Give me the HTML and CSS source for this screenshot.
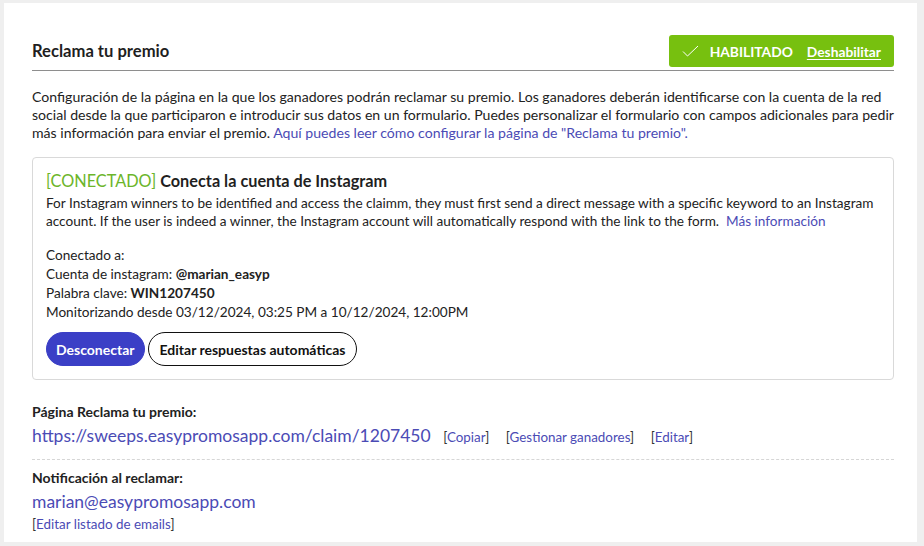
FILE: index.html
```html
<!DOCTYPE html>
<html lang="es">
<head>
	<meta charset="UTF-8">
	<meta name="viewport" content="width=device-width, initial-scale=1.0">
	<title>Reclama tu premio</title>
	<link rel="stylesheet" href="styles.css">
</head>
<body>
	<div class="card">
		<div class="card-head">
			<h3>Reclama tu premio</h3>
			<div class="status">
				<svg class="status-check" width="17" height="12" viewBox="0 0 17 12"><path d="M1 6.5 L5.5 11 L16 1" fill="none" stroke="#fff" stroke-width="1"/></svg>
				<span class="status-label">HABILITADO</span>
				<a href="#" class="status-link">Deshabilitar</a>
			</div>
		</div>

		<p class="intro">Configuración de la página en la que los ganadores podrán reclamar su premio. Los ganadores deberán identificarse con la cuenta de la red social desde la que participaron e introducir sus datos en un formulario. Puedes personalizar el formulario con campos adicionales para pedir más información para enviar el premio. <a href="#">Aquí puedes leer cómo configurar la página de "Reclama tu premio".</a></p>

		<div class="ig-box">
			<h4><span class="ok">[CONECTADO]</span> Conecta la cuenta de Instagram</h4>
			<p class="ig-text">For Instagram winners to be identified and access the claimm, they must first send a direct message with a specific keyword to an Instagram account. If the user is indeed a winner, the Instagram account will automatically respond with the link to the form. &nbsp;<a href="#">Más información</a></p>
			<ul class="ig-info">
				<li>Conectado a:</li>
				<li>Cuenta de instagram: <b>@marian_easyp</b></li>
				<li>Palabra clave: <b>WIN1207450</b></li>
				<li>Monitorizando desde 03/12/2024, 03:25 PM a 10/12/2024, 12:00PM</li>
			</ul>
			<div class="ig-actions">
				<button type="button" class="btn btn-primary">Desconectar</button>
				<button type="button" class="btn btn-outline">Editar respuestas automáticas</button>
			</div>
		</div>

		<div class="field">
			<div class="field-label">Página Reclama tu premio:</div>
			<div class="field-value">
				<a href="#" class="big-link">https://sweeps.easypromosapp.com/claim/1207450</a>
				<span class="small-links">
					<span class="br">[<a href="#">Copiar</a>]</span>
					<span class="br">[<a href="#">Gestionar ganadores</a>]</span>
					<span class="br">[<a href="#">Editar</a>]</span>
				</span>
			</div>
		</div>
		<div class="field field-last">
			<div class="field-label">Notificación al reclamar:</div>
			<div class="field-value">
				<a href="#" class="big-link">marian@easypromosapp.com</a>
			</div>
			<span class="br small">[<a href="#">Editar listado de emails</a>]</span>
		</div>
	</div>
</body>
</html>
```

FILE: styles.css
```css
body{
	margin: 0;
	padding: 3px 7px 4px 4px;
	background: #efefef;
	font-family: "Lato", "Open Sans", sans-serif;
	color: #222;
	font-size: 13.6px;
}
a{
	color: #4b4bb5;
	text-decoration: none;
}
.card{
	background: #fff;
	padding: 32px 23px 10px 28px;
	height: 539px;
	box-sizing: border-box;
}
/* cabecera */
.card-head{
	display: flex;
	justify-content: space-between;
	align-items: center;
	padding-bottom: 3px;
	border-bottom: 1px solid #8e8e8e;
}
.card-head h3{
	margin: 0;
	font-size: 16.6px;
	font-weight: 700;
	color: #1f1f1f;
}
.status{
	display: flex;
	align-items: center;
	height: 32px;
	padding: 0 13px 0 13px;
	background: #77c00f;
	border-radius: 3px;
	color: #fff;
	font-weight: 700;
	font-size: 13.8px;
}
.status-check{
	margin-right: 11px;
}
.status-label{
	margin-right: 14px;
}
.status .status-link{
	color: #fff;
	text-decoration: underline;
	text-underline-offset: 2px;
}
.intro{
	margin: 17px 0 15px;
	font-size: 14.1px;
	line-height: 18px;
}
/* caja instagram */
.ig-box{
	border: 1px solid #d9d9d9;
	border-radius: 4px;
	padding: 13px 13px 13px 13px;
}
.ig-box h4{
	margin: 0;
	font-size: 16.3px;
	line-height: 20px;
	color: #1f1f1f;
}
.ig-box .ok{
	color: #6cb52a;
	font-weight: 400;
}
.ig-text{
	margin: 3px 0 0;
	line-height: 18px;
}
.ig-info{
	list-style: none;
	margin: 16px 0 0;
	padding: 0;
	line-height: 19px;
}
.ig-actions{
	display: flex;
	gap: 3px;
	margin-top: 10px;
}
.btn{
	height: 34px;
	border-radius: 17px;
	font-family: inherit;
	font-size: 14px;
	font-weight: 700;
	padding: 0 11px;
	cursor: pointer;
}
.btn-primary{
	background: #3b3fc6;
	border: 1px solid #3b3fc6;
	color: #fff;
	padding: 0 9px;
}
.btn-outline{
	background: #fff;
	border: 1px solid #111;
	color: #111;
}
/* campos inferiores */
.field{
	padding: 23px 0 10px;
	border-bottom: 1px dashed #d6d6d6;
}
.field-last{
	border-bottom: 0;
	padding-top: 9px;
}
.field-label{
	font-weight: 700;
	font-size: 14px;
	line-height: 18px;
}
.field-value{
	margin-top: 3px;
	line-height: 23px;
}
.big-link{
	font-size: 17.5px;
}
.small-links{
	margin-left: 9px;
}
.br{
	font-size: 13.4px;
	color: #333;
	margin-right: 13px;
}
.small{
	display: block;
	line-height: 18px;
}
```
